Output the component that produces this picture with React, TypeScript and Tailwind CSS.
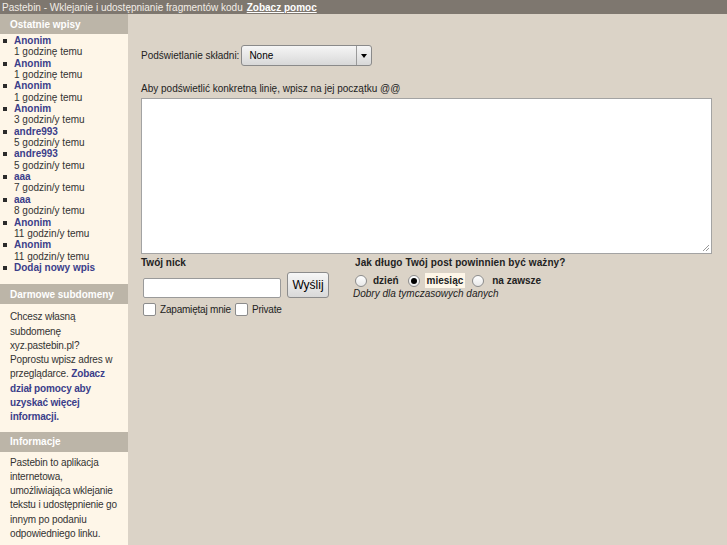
import React from "react";

type Entry = { name: string; time: string };

const recent: Entry[] = [
  { name: "Anonim", time: "1 godzinę temu" },
  { name: "Anonim", time: "1 godzinę temu" },
  { name: "Anonim", time: "1 godzinę temu" },
  { name: "Anonim", time: "3 godzin/y temu" },
  { name: "andre993", time: "5 godzin/y temu" },
  { name: "andre993", time: "5 godzin/y temu" },
  { name: "aaa", time: "7 godzin/y temu" },
  { name: "aaa", time: "8 godzin/y temu" },
  { name: "Anonim", time: "11 godzin/y temu" },
  { name: "Anonim", time: "11 godzin/y temu" },
];

const SideHeader = ({ title }: { title: string }) => (
  <div className="flex h-[20px] items-center bg-[#bcb5a8] pl-[10px] text-[10px] font-bold text-white">
    {title}
  </div>
);

const Bullet = () => (
  <span className="mt-[4px] block h-[4px] w-[4px] shrink-0 bg-[#2b2b2b]" />
);

const Radio = ({ checked }: { checked?: boolean }) => (
  <span className="flex h-[12px] w-[12px] items-center justify-center rounded-full border border-[#8c8c8c] bg-gradient-to-b from-white to-[#e8e8e8]">
    {checked && <span className="block h-[6px] w-[6px] rounded-full bg-black" />}
  </span>
);

const Checkbox = () => (
  <span className="block h-[13px] w-[13px] rounded-[2px] border border-[#8c8c8c] bg-white" />
);

const Sidebar = () => (
  <aside className="flex w-[128px] shrink-0 flex-col bg-[#fef6e8]">
    <SideHeader title="Ostatnie wpisy" />
    <ul className="flex flex-col pb-[11px] pl-[3px] pt-[1px] text-[10px] leading-[11.35px]">
      {recent.map((e, i) => (
        <li key={i} className="flex gap-[7px]">
          <Bullet />
          <div className="flex flex-col">
            <a className="font-bold text-[#3b3e8a]">{e.name}</a>
            <span className="text-[#333]">{e.time}</span>
          </div>
        </li>
      ))}
      <li className="flex gap-[7px]">
        <Bullet />
        <a className="font-bold text-[#3b3e8a]">Dodaj nowy wpis</a>
      </li>
    </ul>
    <SideHeader title="Darmowe subdomeny" />
    <p className="whitespace-nowrap pb-[7px] pl-[10px] pt-[6px] text-[10px] leading-[14.3px] tracking-[-0.15px] text-[#333]">
      Chcesz własną
      <br />
      subdomenę
      <br />
      xyz.pastebin.pl?
      <br />
      Poprostu wpisz adres w
      <br />
      przeglądarce.{" "}
      <a className="font-bold text-[#3b3e8a]">
        Zobacz
        <br />
        dział pomocy aby
        <br />
        uzyskać więcej
        <br />
        informacji.
      </a>
    </p>
    <SideHeader title="Informacje" />
    <p className="whitespace-nowrap pl-[10px] pt-[4px] text-[10px] leading-[14.3px] tracking-[-0.15px] text-[#333]">
      Pastebin to aplikacja
      <br />
      internetowa,
      <br />
      umożliwiająca wklejanie
      <br />
      tekstu i udostępnienie go
      <br />
      innym po podaniu
      <br />
      odpowiedniego linku.
    </p>
  </aside>
);

export default function App() {
  return (
    <div className="flex min-h-[545px] flex-col bg-[#dbd3c7] font-['Liberation_Sans',Arial,sans-serif] text-[#222]">
      <header className="flex h-[14px] items-center bg-[#7e776f] pl-[2px] text-[10px] text-[#f2ede6]">
        <span>Pastebin - Wklejanie i udostępnianie fragmentów kodu</span>
        <a className="ml-[4px] font-bold text-white underline">Zobacz pomoc</a>
      </header>
      <div className="flex flex-1">
        <Sidebar />
        <main className="flex-1 pl-[13px] pr-[15px] pt-[31px] text-[10px] text-[#222]">
          <div className="flex items-center gap-[2px]">
            <span>Podświetlanie składni:</span>
            <div className="flex h-[21px] w-[131px] items-center rounded-[3px] border border-[#8a8a8a] bg-gradient-to-b from-[#f6f6f6] to-[#d8d8d8]">
              <span className="flex-1 pl-[7px] text-[10px] text-black">None</span>
              <span className="flex h-full w-[15px] items-center justify-center border-l border-[#9a9a9a]">
                <span className="block h-0 w-0 border-x-[3.5px] border-t-[4px] border-x-transparent border-t-black" />
              </span>
            </div>
          </div>
          <div className="mt-[15px]">Aby podświetlić konkretną linię, wpisz na jej początku @@</div>
          <div className="relative mt-[2px] h-[156px] w-full border border-[#a3a3a3] bg-white">
            <svg className="absolute bottom-[1px] right-[1px]" width="9" height="9" viewBox="0 0 9 9">
              <path d="M8 2 L2 8 M8 5 L5 8" stroke="#999" strokeWidth="1" />
            </svg>
          </div>
          <div className="mt-[3px] flex">
            <div className="flex w-[214px] flex-col">
              <div className="font-bold leading-[12px]">Twój nick</div>
              <div className="mt-[3px] flex items-center gap-[6px] pl-[2px]">
                <span className="mt-[5px] block h-[20px] w-[138px] rounded-[2px] border border-[#9a9a9a] bg-white" />
                <button className="h-[26px] w-[42px] rounded-[3px] border border-[#8c8c8c] bg-gradient-to-b from-[#f7f7f7] to-[#d9d9d9] text-[12px] text-black">
                  Wyślij
                </button>
              </div>
              <div className="mt-[4px] flex items-center gap-[4px] pl-[2px] tracking-[-0.2px]">
                <Checkbox />
                <span>Zapamiętaj mnie</span>
                <Checkbox />
                <span>Private</span>
              </div>
            </div>
            <div className="flex flex-col">
              <div className="font-bold leading-[12px] tracking-[0.1px]">Jak długo Twój post powinnien być ważny?</div>
              <div className="mt-[4px] flex h-[15px] items-center">
                <Radio />
                <span className="ml-[6px] font-bold">dzień</span>
                <span className="ml-[9px]"><Radio checked /></span>
                <span className="ml-[5px] bg-[#fef6e8] px-[2px] font-bold leading-[15px]">miesiąc</span>
                <span className="ml-[7px]"><Radio /></span>
                <span className="ml-[8px] font-bold">na zawsze</span>
              </div>
              <div className="-ml-[2px] italic leading-[12px]">Dobry dla tymczasowych danych</div>
            </div>
          </div>
        </main>
      </div>
    </div>
  );
}
